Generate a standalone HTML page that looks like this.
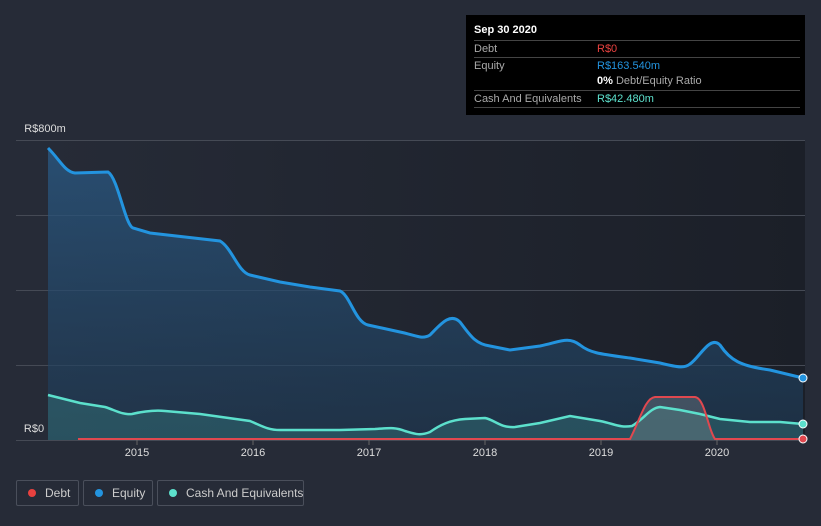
<!DOCTYPE html>
<html><head><style>
body{margin:0;width:821px;height:526px;background:#262b37;font-family:"Liberation Sans",sans-serif;overflow:hidden;position:relative}
.tt{position:absolute;left:466px;top:15px;width:339px;height:100px;background:#000;color:#fff;font-size:11px}
.row{position:absolute;left:8px;width:326px;border-top:1px solid #444;height:16px;line-height:16px;color:#aaa}
.row span{position:absolute;left:123px}
.leg{position:absolute;top:480px;height:26px;border:1px solid #4a4f5b;border-radius:2px;color:#ccc;font-size:12px;line-height:24px;box-sizing:border-box;white-space:nowrap}
.leg i{position:absolute;left:11px;top:8px;width:8px;height:8px;border-radius:50%}
</style></head><body>
<svg width="821" height="526" style="position:absolute;left:0;top:0">
<defs>
<linearGradient id="eg" x1="0" y1="0" x2="0" y2="1"><stop offset="0" stop-color="#2a5a85" stop-opacity=".75"/><stop offset="1" stop-color="#1e3a55" stop-opacity=".6"/></linearGradient>
<linearGradient id="bg" x1="0" y1="0" x2="1" y2="0"><stop offset="0" stop-color="#262b37"/><stop offset="1" stop-color="#1b1f28"/></linearGradient>
</defs>
<rect x="48" y="140" width="757" height="300" fill="url(#bg)"/>
<g stroke="#454a55" stroke-width="1">
<line x1="16" y1="140.5" x2="805" y2="140.5"/><line x1="16" y1="215.5" x2="805" y2="215.5"/><line x1="16" y1="290.5" x2="805" y2="290.5"/><line x1="16" y1="365.5" x2="805" y2="365.5"/><line x1="16" y1="440.5" x2="805" y2="440.5"/>
</g>
<path d="M48,148 C60,160 65,172 75,173 L108,172 C118,178 125,225 133,228 L150,233 L220,241 C232,248 238,272 250,275 L280,282 L310,287 L340,291 C350,295 355,322 368,325 L400,332 C415,335 422,340 430,335 C440,325 450,312 460,322 C470,335 475,344 490,346 L510,350 L540,346 C560,342 568,336 580,345 C590,353 600,354 630,358 L660,363 C680,368 685,368 690,364 C700,357 710,335 720,345 C730,360 740,366 770,370 L803,378 L803,440 L48,440Z" fill="url(#eg)"/>
<path d="M48,148 C60,160 65,172 75,173 L108,172 C118,178 125,225 133,228 L150,233 L220,241 C232,248 238,272 250,275 L280,282 L310,287 L340,291 C350,295 355,322 368,325 L400,332 C415,335 422,340 430,335 C440,325 450,312 460,322 C470,335 475,344 490,346 L510,350 L540,346 C560,342 568,336 580,345 C590,353 600,354 630,358 L660,363 C680,368 685,368 690,364 C700,357 710,335 720,345 C730,360 740,366 770,370 L803,378" fill="none" stroke="#2394df" stroke-width="3"/>
<path d="M48,395 L80,403 L105,407 C115,410 122,415 132,414 C145,411 155,410 165,411 L200,414 L250,421 C262,426 268,430 280,430 L340,430 L375,429 C390,428 395,427 405,431 C415,434 420,436 430,432 C440,425 450,420 465,419 L485,418 C495,420 500,428 515,427 L540,423 L570,416 L600,421 C615,424 620,428 632,426 C645,418 650,408 660,407 L680,410 L700,414 L720,419 L750,422 L780,422 L803,424 L803,440 L48,440Z" fill="#3a8a8a" fill-opacity=".35"/>
<path d="M630,440 C640,420 645,398 655,397 L695,397 C705,398 708,430 715,440Z" fill="#aaa" fill-opacity=".25"/>
<path d="M48,395 L80,403 L105,407 C115,410 122,415 132,414 C145,411 155,410 165,411 L200,414 L250,421 C262,426 268,430 280,430 L340,430 L375,429 C390,428 395,427 405,431 C415,434 420,436 430,432 C440,425 450,420 465,419 L485,418 C495,420 500,428 515,427 L540,423 L570,416 L600,421 C615,424 620,428 632,426 C645,418 650,408 660,407 L680,410 L700,414 L720,419 L750,422 L780,422 L803,424" fill="none" stroke="#5ce0cc" stroke-width="2.5"/>
<path d="M78,439 L630,439 C640,420 645,398 655,397 L695,397 C705,398 708,430 715,439 L803,439" fill="none" stroke="#e0484f" stroke-width="2"/>
<circle cx="803" cy="378" r="4" fill="#2394df" stroke="#fff" stroke-width="1"/>
<circle cx="803" cy="424" r="4" fill="#5ce0cc" stroke="#fff" stroke-width="1"/>
<circle cx="803" cy="439" r="4" fill="#e0484f" stroke="#fff" stroke-width="1"/>
<g stroke="#666" ><line x1="137" y1="440" x2="137" y2="445"/><line x1="253" y1="440" x2="253" y2="445"/><line x1="369" y1="440" x2="369" y2="445"/><line x1="485" y1="440" x2="485" y2="445"/><line x1="601" y1="440" x2="601" y2="445"/><line x1="717" y1="440" x2="717" y2="445"/></g>
<g fill="#ddd" font-size="11" text-anchor="middle" font-family="Liberation Sans">
<text x="137" y="456">2015</text><text x="253" y="456">2016</text><text x="369" y="456">2017</text><text x="485" y="456">2018</text><text x="601" y="456">2019</text><text x="717" y="456">2020</text>
<text x="45" y="132">R$800m</text><text x="34" y="432">R$0</text>
</g>
</svg>
<div class="tt">
<div style="position:absolute;left:8px;top:9px;font-weight:bold;font-size:11px">Sep 30 2020</div>
<div class="row" style="top:25px">Debt<span style="color:#e8413f">R$0</span></div>
<div class="row" style="top:42px">Equity<span style="color:#2394df">R$163.540m</span></div>
<div class="row" style="top:58px;border-top:none"><span style="color:#aaa"><b style="color:#fff">0%</b> Debt/Equity Ratio</span></div>
<div class="row" style="top:75px">Cash And Equivalents<span style="color:#5ce0cc">R$42.480m</span></div>
<div class="row" style="top:92px;height:0"></div>
</div>
<div class="leg" style="left:16px;width:63px"><i style="background:#e8413f"></i><span style="padding-left:28px">Debt</span></div>
<div class="leg" style="left:83px;width:70px"><i style="background:#2394df"></i><span style="padding-left:28px">Equity</span></div>
<div class="leg" style="left:157px;width:147px"><i style="background:#5ce0cc"></i><span style="padding-left:28px">Cash And Equivalents</span></div>
</body></html>
